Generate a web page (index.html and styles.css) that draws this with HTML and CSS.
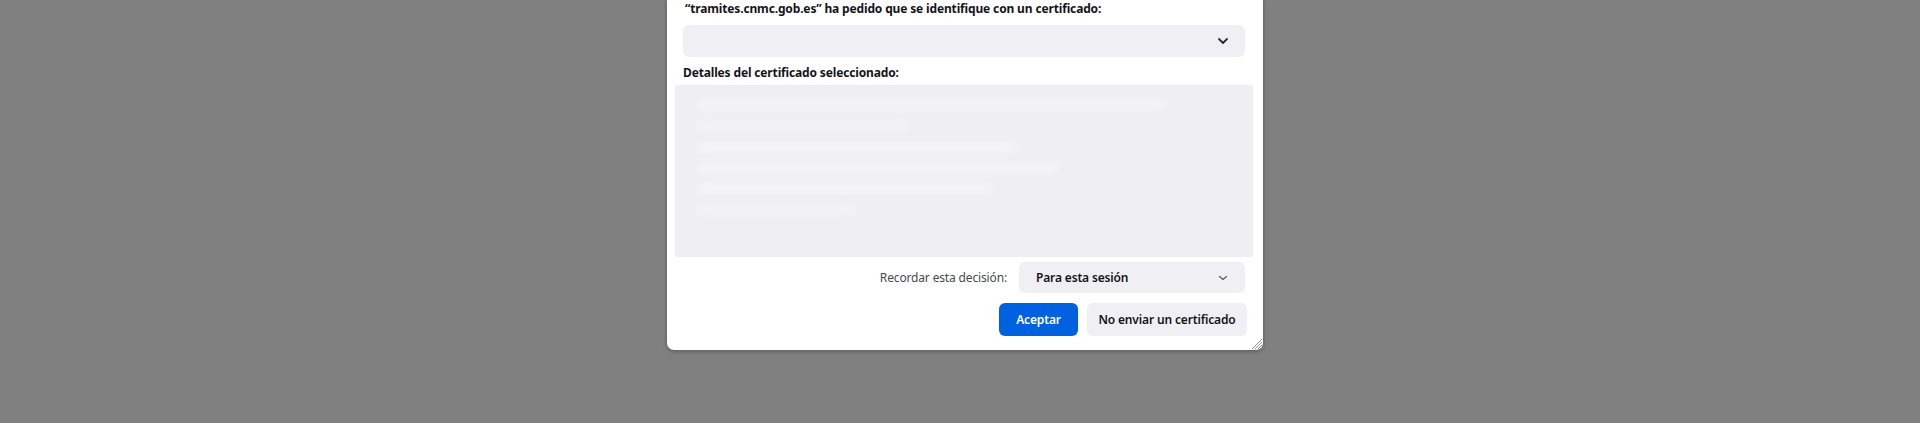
FILE: index.html
```html
<!DOCTYPE html>
<html lang="es">
<head>
<meta charset="utf-8">
<title>Solicitud de identificación de usuario</title>
<link rel="stylesheet" href="styles.css">
</head>
<body>
<div class="dialog">
  <div class="title">“tramites.cnmc.gob.es” ha pedido que se identifique con un certificado:</div>
  <div class="select cert-select">
    <span class="select-text"></span>
    <svg class="chev" width="12" height="8" viewBox="0 0 12 8"><path d="M2 2 L6 6 L10 2" fill="none" stroke="#2b2a33" stroke-width="1.8" stroke-linecap="round" stroke-linejoin="round"/></svg>
  </div>
  <div class="subtitle">Detalles del certificado seleccionado:</div>
  <div class="details">
    <div class="blur-line w1"></div>
    <div class="blur-line w2"></div>
    <div class="blur-line w3"></div>
    <div class="blur-line w4"></div>
    <div class="blur-line w5"></div>
    <div class="blur-line w6"></div>
  </div>
  <div class="remember-row">
    <span class="remember-label">Recordar esta decisión:</span>
    <div class="select remember-select">
      <span class="select-text">Para esta sesión</span>
      <svg class="chev" width="12" height="8" viewBox="0 0 12 8"><path d="M2.5 2.5 L6 5.5 L9.5 2.5" fill="none" stroke="#5b5b66" stroke-width="1.2" stroke-linecap="round" stroke-linejoin="round"/></svg>
    </div>
  </div>
  <div class="button-row">
    <button class="btn primary">Aceptar</button>
    <button class="btn secondary">No enviar un certificado</button>
  </div>
  <svg class="grip" width="14" height="14" viewBox="0 0 14 14"><path d="M13 3 L3 13 M13 6 L6 13 M13 9 L9 13 M13 12 L12 13" stroke="#8f8f9d" stroke-width="1" fill="none"/></svg>
</div>
</body>
</html>
```
FILE: styles.css
```css
html, body {
  margin: 0;
  padding: 0;
  height: 100%;
}
body {
  background: #808080;
  font-family: "Noto Sans", "Open Sans", sans-serif;
  color: #15141a;
  overflow: hidden;
}
.dialog {
  position: relative;
  box-sizing: border-box;
  width: 596px;
  height: 350px;
  margin-left: 667px;
  background: #ffffff;
  border-radius: 0 0 7px 7px;
  box-shadow: 0 1px 4px rgba(0,0,0,0.35);
  padding: 0 18px 0 16px;
  display: flex;
  flex-direction: column;
}
.title {
  font-size: 12px;
  font-weight: 700;
  line-height: 18px;
  padding-left: 2px;
  letter-spacing: -0.15px;
}
.select {
  box-sizing: border-box;
  background: #f0f0f4;
  border-radius: 6px;
  display: flex;
  align-items: center;
  justify-content: space-between;
  padding: 0 16px 0 17px;
}
.cert-select {
  margin-top: 7px;
  height: 32px;
}
.chev { display: block; }
.subtitle {
  font-size: 12px;
  font-weight: 700;
  line-height: 18px;
  margin-top: 7px;
  letter-spacing: -0.15px;
}
.details {
  box-sizing: border-box;
  margin: 3px -8px 0 -8px;
  height: 172px;
  background: #efeff3;
  border-radius: 2px;
  padding: 14px 20px;
  display: flex;
  flex-direction: column;
  gap: 9px;
}
.blur-line {
  height: 12px;
  background: #f3f3f6;
  border-radius: 6px;
  filter: blur(3px);
}
.w1 { width: 88%; }
.w2 { width: 40%; }
.w3 { width: 60%; }
.w4 { width: 68%; }
.w5 { width: 56%; }
.w6 { width: 30%; }
.remember-row {
  display: flex;
  justify-content: flex-end;
  align-items: center;
  margin-top: 5px;
  gap: 12px;
}
.remember-label {
  font-size: 12px;
  color: #4a4953;
  letter-spacing: -0.15px;
}
.remember-select {
  width: 226px;
  height: 31px;
  padding: 0 16px 0 17px;
}
.remember-select .select-text {
  font-size: 12px;
  font-weight: 600;
  letter-spacing: -0.15px;
}
.button-row {
  display: flex;
  justify-content: flex-end;
  gap: 9px;
  margin-top: 10px;
  margin-right: -2px;
}
.btn {
  font-family: inherit;
  font-size: 12px;
  font-weight: 600;
  letter-spacing: -0.15px;
  border: none;
  border-radius: 6px;
  height: 33px;
  padding: 0;
}
.primary {
  background: #0061e0;
  color: #ffffff;
  width: 79px;
}
.secondary {
  background: #f0f0f4;
  color: #15141a;
  width: 160px;
}
.grip {
  position: absolute;
  right: 0;
  bottom: 0;
}
```
